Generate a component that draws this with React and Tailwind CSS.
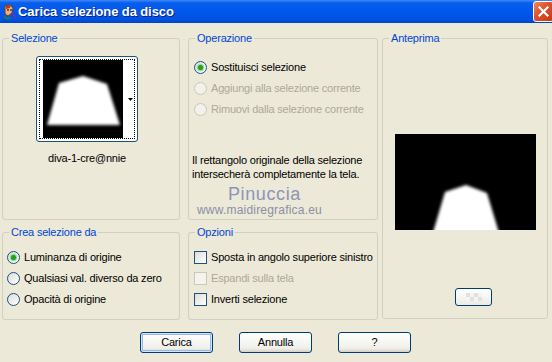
import React from 'react';

// XP-style groupbox
function Group({ title, className = '', children }) {
    return (
        <fieldset className={`border border-[#D0D0BF] rounded-[3px] p-0 m-0 ${className}`}>
            <legend className="ml-[6px] px-[2px] text-[11px] leading-[13px] text-[#0046D5]">{title}</legend>
            {children}
        </fieldset>
    );
}

function Radio({ checked, disabled, label }) {
    return (
        <div className="flex items-center h-[21px]">
            <span
                className={`w-[13px] h-[13px] rounded-full border flex items-center justify-center shrink-0 ${
                    disabled
                        ? 'border-[#CAC8BB] bg-[#F2F1EA]'
                        : 'border-[#1C5180] bg-[linear-gradient(135deg,#DCDCD7,#FFFFFF)]'
                }`}
            >
                {checked && <span className="w-[5px] h-[5px] rounded-full bg-[#21A121] shadow-[0_0_1px_1px_#7FD17F]" />}
            </span>
            <span className={`ml-[4px] text-[11px] whitespace-nowrap ${disabled ? 'text-[#ACA899]' : 'text-black'}`}>{label}</span>
        </div>
    );
}

function Check({ disabled, label }) {
    return (
        <div className="flex items-center h-[21px]">
            <span
                className={`w-[13px] h-[13px] border shrink-0 ${
                    disabled
                        ? 'border-[#CAC8BB] bg-[#F4F3EE]'
                        : 'border-[#1C5180] bg-[linear-gradient(135deg,#DCDCD7,#FFFFFF)]'
                }`}
            />
            <span className={`ml-[4px] text-[11px] whitespace-nowrap ${disabled ? 'text-[#ACA899]' : 'text-black'}`}>{label}</span>
        </div>
    );
}

function XpButton({ children, isDefault }) {
    return (
        <button
            className={`w-[73px] h-[21px] rounded-[3px] border border-[#003C74] text-[11px] text-black bg-[linear-gradient(to_bottom,#FFFFFF,#F0F0EA_80%,#D6D0C5)] ${
                isDefault ? 'shadow-[inset_0_0_0_1px_#CEE7FF,inset_0_0_0_2px_#98B8EA]' : ''
            }`}
        >
            {children}
        </button>
    );
}

function TitleIcon() {
    return (
        <svg width="15" height="16" viewBox="0 0 15 16">
            <path d="M3 2 L8 1 L11 4 L10 9 L6 12 L3 10 Z" fill="#F2B26B" stroke="#7A3A12" strokeWidth="1" />
            <path d="M4 2 L9 1 L8 4 L4 5 Z" fill="#C4391E" />
            <circle cx="6" cy="6" r="1" fill="#1B3FA8" />
            <circle cx="9" cy="6" r="1" fill="#1B3FA8" />
            <path d="M2 12 L5 15 L8 13" stroke="#2E7D32" strokeWidth="1.5" fill="none" />
            <path d="M11 10 L14 14" stroke="#8E24AA" strokeWidth="1.5" />
        </svg>
    );
}

export default function App() {
    return (
        <div className="w-[552px] h-[362px] bg-[#ECE9D8] overflow-hidden font-['Liberation_Sans',Arial,sans-serif] tracking-[-0.2px] text-black">
            {/* Title bar */}
            <div className="h-[23px] flex items-center bg-[linear-gradient(to_bottom,#3D8BFF_0%,#0A5EEA_12%,#0058EE_45%,#0054E3_80%,#0046C8_100%)]">
                <div className="ml-[2px] w-[15px] flex items-center"><TitleIcon /></div>
                <span className="ml-[1px] text-[13px] font-bold tracking-[-0.1px] text-white [text-shadow:1px_1px_0_#0A1E80]">Carica selezione da disco</span>
                <div className="ml-auto mr-[-2px] w-[21px] h-[21px] rounded-[3px] border border-white bg-[linear-gradient(135deg,#F08A63,#E0542F_40%,#C33A12)] flex items-center justify-center">
                    <svg width="11" height="11" viewBox="0 0 11 11">
                        <path d="M1.5 1.5 L9.5 9.5 M9.5 1.5 L1.5 9.5" stroke="white" strokeWidth="2.2" strokeLinecap="square" />
                    </svg>
                </div>
            </div>

            {/* Body */}
            <div className="flex pl-[2px] pt-[9px]">
                {/* Left column */}
                <div className="flex flex-col gap-[6px] w-[178px]">
                    <Group title="Selezione" className="h-[188px]">
                        <div className="ml-[33px] mt-[11px] w-[102px] flex flex-col items-center">
                            <div className="w-[102px] h-[86px] rounded-[3px] border border-[#1C5180] bg-white p-[2px]">
                                <div className="w-full h-full border border-dotted border-black flex pl-[3px]">
                                    <svg width="80" height="78" viewBox="0 0 80 78" className="block">
                                        <defs>
                                            <filter id="b1" x="-20%" y="-20%" width="140%" height="140%">
                                                <feGaussianBlur stdDeviation="1.4" />
                                            </filter>
                                        </defs>
                                        <rect width="80" height="78" fill="black" />
                                        <polygon points="40,16 16,23 4,65 77,65 64,24" fill="white" filter="url(#b1)" />
                                    </svg>
                                    <div className="flex-1 flex items-center justify-end pr-[1px]">
                                        <svg width="5" height="3" viewBox="0 0 5 3"><path d="M0 0 H5 L2.5 3 Z" fill="black" /></svg>
                                    </div>
                                </div>
                            </div>
                            <div className="mt-[10px] text-[11px] leading-[13px] whitespace-nowrap">diva-1-cre@nnie</div>
                        </div>
                    </Group>
                    <Group title="Crea selezione da" className="h-[94px]">
                        <div className="ml-[4px] mt-[8px]">
                            <Radio checked label="Luminanza di origine" />
                            <Radio label="Qualsiasi val. diverso da zero" />
                            <Radio label="Opacità di origine" />
                        </div>
                    </Group>
                </div>

                {/* Middle column */}
                <div className="ml-[8px] flex flex-col gap-[6px] w-[190px]">
                    <Group title="Operazione" className="h-[188px]">
                        <div className="ml-[5px] mt-[12px]">
                            <Radio checked label="Sostituisci selezione" />
                            <Radio disabled label="Aggiungi alla selezione corrente" />
                            <Radio disabled label="Rimuovi dalla selezione corrente" />
                        </div>
                        <p className="ml-[3px] mt-[33px] text-[11px] leading-[14px]">
                            Il rettangolo originale della selezione<br />intersecherà completamente la tela.
                        </p>
                        <div className="ml-[39px] mt-[4px] text-[18px] leading-[18px] tracking-[0.6px] text-[#8C94B8]">Pinuccia</div>
                        <div className="ml-[8px] mt-[0px] text-[12px] leading-[14px] tracking-[0.2px] text-[#8A8FA6]">www.maidiregrafica.eu</div>
                    </Group>
                    <Group title="Opzioni" className="h-[94px]">
                        <div className="ml-[5px] mt-[8px]">
                            <Check label="Sposta in angolo superiore sinistro" />
                            <Check disabled label="Espandi sulla tela" />
                            <Check label="Inverti selezione" />
                        </div>
                    </Group>
                </div>

                {/* Right column */}
                <Group title="Anteprima" className="ml-[4px] w-[166px] h-[287px]">
                    <svg width="141" height="96" viewBox="0 0 141 96" className="block ml-[12px] mt-[89px]">
                        <defs>
                            <filter id="b2" x="-20%" y="-20%" width="140%" height="140%">
                                <feGaussianBlur stdDeviation="1.4" />
                            </filter>
                        </defs>
                        <rect width="141" height="96" fill="black" />
                        <polygon points="71,51 50,58 37,102 105,102 92,59" fill="white" filter="url(#b2)" />
                    </svg>
                    <div className="ml-[72px] mt-[58px] w-[37px] h-[18px] rounded-[3px] border border-[#003C74] bg-[linear-gradient(to_bottom,#FFFFFF,#ECEBE6)] flex items-center justify-center">
                        <div className="w-[16px] h-[8px] bg-[repeating-conic-gradient(#F4F4F0_0%_25%,#E2E2DC_0%_50%)] bg-[length:8px_8px]" />
                    </div>
                </Group>
            </div>

            {/* Buttons */}
            <div className="flex pl-[140px] gap-[26px] mt-[12px]">
                <XpButton isDefault>Carica</XpButton>
                <XpButton>Annulla</XpButton>
                <XpButton>?</XpButton>
            </div>
        </div>
    );
}
